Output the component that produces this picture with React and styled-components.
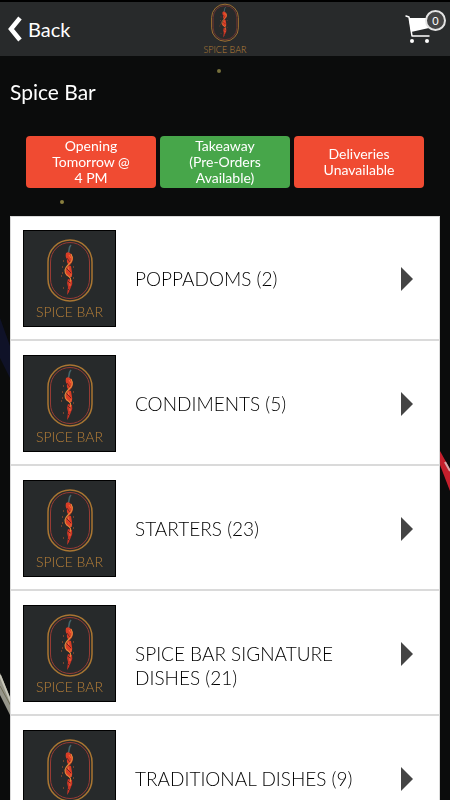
import React from 'react';
import styled, { createGlobalStyle } from 'styled-components';

const black = '#0b0c0c';
const charcoal = '#282a2b';
const white = '#ffffff';
const red = '#f04b32';
const green = '#47a64a';
const gold = '#b98038';
const lightGray = '#dadada';
const darkGray = '#444444';

const categories = [
  { name: 'POPPADOMS', count: 2 },
  { name: 'CONDIMENTS', count: 5 },
  { name: 'STARTERS', count: 23 },
  { name: 'SPICE BAR SIGNATURE DISHES', count: 21 },
  { name: 'TRADITIONAL DISHES', count: 9 },
];

const Emblem = () => (
  <svg viewBox="0 0 46 64" fill="none" aria-hidden="true">
    <rect x="1" y="1" width="44" height="61" rx="22" stroke="#a97632" strokeWidth="1.5" />
    <rect x="3.5" y="3.5" width="39" height="56" rx="19.5" stroke="#963b35" />
    <path d="M21 14c2-2 0-5 3-8" stroke="#45656a" strokeWidth="1.6" />
    <path d="M19 14q3-2 5 1l2 4q0 4-3 7-4-1-3-6-2-2-1-6z" fill="#d93c25" />
    <path d="M21 26l3 1 1 6q1 3-2 6l-4-3q-2-4 1-7z" fill="#d93c25" />
    <path d="M21 40l4 1q1 4-1 7l-2 5-2 3 1-8-1-4z" fill="#c93425" />
    <path d="M20 19c1 3 4 3 4 6m-4 5l4 4m-3 8l3 3m-3 5l2 2" stroke="#6e2623" />
    <path d="M24 15c3 5 1 8-3 11-4 4-4 7-1 10 3 2 5 4 3 7" stroke="#e48a3c" strokeWidth="1.1" />
    <path d="M22 16l2 3m-3 9l1 3m2 4v3m-1 6v3" stroke="#f36a3a" />
    <path d="M16 22h1m-2 6h1m-2 9h1m11-9h1m-1 11h1m-11 10h1m-2-15h1" stroke="#c25a2c" />
  </svg>
);

const CartIcon = () => (
  <svg width="28" height="30" viewBox="0 0 28 30" fill="none" aria-hidden="true">
    <path d="M1 2l3 1 3 19h17" stroke={white} strokeWidth="1.5" strokeLinecap="round" strokeLinejoin="round" />
    <path d="M4 4h20v10L6 18z" fill={white} />
    <circle cx="7" cy="27" r="2" fill={white} />
    <circle cx="22" cy="27" r="2" fill={white} />
  </svg>
);

// table, cutlery and cloth that peek out around the menu
const Backdrop = () => (
  <Scenery viewBox="0 0 450 800" preserveAspectRatio="none" aria-hidden="true">
    <path d="M0 318l10 28v32L0 358z" fill="#0f1228" />
    <path d="M0 673l12 29v17L0 695z" fill="#96958a" />
    <path d="M0 675l12 30" stroke="#c9c8ba" strokeWidth="2" />
    <path d="M0 686l12 22" stroke="#6f6d55" />
    <path d="M440 451l10 18v22l-10-26z" fill="#c41f2c" />
    <path d="M445 462l5 9" stroke="#d6a9ac" strokeWidth="2" />
    <circle cx="219" cy="71" r="2" fill="#77713d" />
    <circle cx="62" cy="202" r="2" fill="#8a803f" />
  </Scenery>
);

const App = () => (
  <Page>
    <GlobalStyle />
    <Backdrop />
    <Header>
      <BackButton type="button">
        <svg width="14" height="26" viewBox="0 0 14 26" fill="none" aria-hidden="true">
          <path d="M12 2L3 13l9 11" stroke={white} strokeWidth="4.5" />
        </svg>
        Back
      </BackButton>
      <HeaderLogo>
        <Emblem />
        <span>SPICE BAR</span>
      </HeaderLogo>
      <CartButton type="button" aria-label="Basket">
        <CartIcon />
        <CartBadge>0</CartBadge>
      </CartButton>
    </Header>
    <Main>
      <Title>Spice Bar</Title>
      <StatusBar>
        <Status color={red}>Opening<br />Tomorrow @<br />4 PM</Status>
        <Status color={green}>Takeaway<br />(Pre-Orders<br />Available)</Status>
        <Status color={red}>Deliveries<br />Unavailable</Status>
      </StatusBar>
      <Menu>
        {categories.map(({ name, count }) => (
          <li key={name}>
            <CategoryLink href="#">
              <Thumbnail>
                <Emblem />
                <span>SPICE BAR</span>
              </Thumbnail>
              <CategoryName>{`${name} (${count})`}</CategoryName>
              <Arrow width="12" height="24" viewBox="0 0 12 24" aria-hidden="true">
                <path d="M0 0l12 12L0 24z" fill={darkGray} />
              </Arrow>
            </CategoryLink>
          </li>
        ))}
      </Menu>
    </Main>
  </Page>
);

const GlobalStyle = createGlobalStyle`
  * {
    box-sizing: border-box;
  }

  body {
    margin: 0;
    background: ${black};
    font-family: Lato, 'Liberation Sans', sans-serif;
  }

  button {
    border: 0;
    padding: 0;
    background: none;
    color: inherit;
    font-family: inherit;
    cursor: pointer;
  }
`;

const Page = styled.div`
  height: 100vh;
  overflow-y: auto;
  scrollbar-width: none;
  color: ${white};
`;

const Scenery = styled.svg`
  position: fixed;
  inset: 0;
  width: 100%;
  height: 100%;
`;

const Header = styled.header`
  position: sticky;
  top: 0;
  z-index: 1;
  display: grid;
  grid-template-columns: 1fr auto 1fr;
  align-items: center;
  height: 56px;
  padding: 0 4px;
  border-top: 2px solid #000;
  background: ${charcoal};
`;

const BackButton = styled.button`
  display: flex;
  align-items: center;
  justify-self: start;
  gap: 6px;
  padding-left: 4px;
  font-size: 20px;
  line-height: 24px;
`;

const HeaderLogo = styled.div`
  display: flex;
  flex-direction: column;
  align-items: center;
  gap: 2px;
  color: ${gold};
  font-size: 9px;
  font-weight: 300;
  line-height: 10px;

  svg {
    width: 28px;
    height: 40px;
  }
`;

const CartButton = styled.button`
  position: relative;
  justify-self: end;
  width: 41px;
  height: 38px;
  display: flex;
  align-items: flex-end;
  padding-bottom: 4px;
`;

const CartBadge = styled.span`
  position: absolute;
  top: 0;
  right: 0;
  width: 21px;
  height: 21px;
  border: 2px solid #e4e4e4;
  border-radius: 50%;
  background: ${darkGray};
  font-size: 11px;
  line-height: 17px;
  text-align: center;
`;

const Main = styled.main`
  position: relative;
  padding: 24px 10px 0;
`;

const Title = styled.h1`
  margin: 0;
  font-size: 21px;
  font-weight: 400;
  line-height: 24px;
`;

const StatusBar = styled.div`
  display: flex;
  gap: 4px;
  padding: 32px 16px 28px;
`;

const Status = styled.div`
  display: flex;
  flex: 1;
  align-items: center;
  justify-content: center;
  min-height: 52px;
  border-radius: 4px;
  background: ${p => p.color};
  font-size: 14px;
  line-height: 16px;
  text-align: center;
`;

const Menu = styled.ul`
  margin: 0;
  padding: 0 1px;
  background: ${white};
  box-shadow: inset 0 0 0 1px ${lightGray};
  list-style: none;
`;

const CategoryLink = styled.a`
  display: flex;
  align-items: flex-start;
  gap: 19px;
  padding: 14px 26px 12px 12px;
  border-bottom: 2px solid ${lightGray};
  color: #000000;
  text-decoration: none;
`;

const Thumbnail = styled.div`
  display: flex;
  flex-direction: column;
  flex-shrink: 0;
  align-items: center;
  width: 93px;
  height: 97px;
  padding-top: 8px;
  border: 1px solid #000;
  background: #272a2b;
  color: ${gold};
  font-size: 14px;
  font-weight: 300;
  line-height: 18px;

  svg {
    width: 46px;
    height: 64px;
  }
`;

const CategoryName = styled.span`
  flex: 1;
  padding-top: 37px;
  font-size: 19px;
  font-weight: 300;
  line-height: 24px;
`;

const Arrow = styled.svg`
  align-self: center;
`;

export default App;
